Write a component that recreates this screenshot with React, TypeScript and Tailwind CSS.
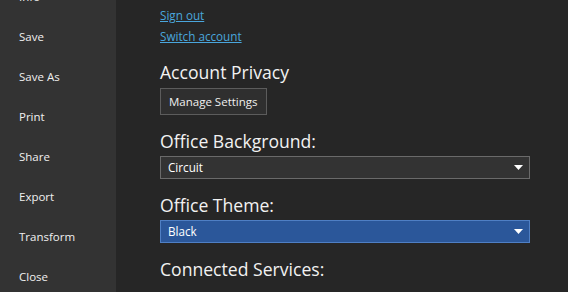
const navItems = ["Info", "Save", "Save As", "Print", "Share", "Export", "Transform", "Close"];

function Select({ value, active }: { value: string; active?: boolean }) {
  return (
    <div
      className={`flex items-center justify-between w-[370px] h-[23px] pl-[7px] pr-[6px] border text-[11.7px] text-white ${
        active ? "bg-[#2b579a] border-[#4f7fc4]" : "bg-[#333333] border-[#6a6a6a]"
      }`}
    >
      <span>{value}</span>
      <svg width="9" height="6" viewBox="0 0 9 6">
        <path d="M0 0 H9 L4.5 5 Z" fill="#ffffff" />
      </svg>
    </div>
  );
}

export default function App() {
  return (
    <div
      className="flex w-[568px] h-[292px] overflow-hidden bg-[#262626] text-white"
      style={{ fontFamily: '"Open Sans", "Noto Sans", sans-serif' }}
    >
      <nav className="w-[116px] flex-shrink-0 bg-[#333333] flex flex-col -mt-[23px]">
        {navItems.map((item) => (
          <div key={item} className="h-10 flex-shrink-0 flex items-center pl-[19px] text-[11.5px] text-[#f0f0f0]">
            {item}
          </div>
        ))}
      </nav>

      <main className="flex-1 pl-[44px] pt-[6px] flex flex-col items-start">
        <a className="text-[11.7px] leading-[18px] text-[#4aa6dd] underline">Sign out</a>
        <a className="mt-[3px] text-[11.7px] leading-[18px] text-[#4aa6dd] underline">Switch account</a>

        <h2 className="mt-[16px] text-[17.6px] leading-[22px] text-[#f2f2f2]">Account Privacy</h2>
        <button className="mt-[5px] h-[27px] px-[8px] bg-[#2f2f2f] border border-[#5c5c5c] text-[11.5px] text-[#f0f0f0]">
          Manage Settings
        </button>

        <h2 className="mt-[15px] text-[17.6px] leading-[22px] text-[#f2f2f2]">Office Background:</h2>
        <div className="mt-[4px]">
          <Select value="Circuit" />
        </div>

        <h2 className="mt-[15px] text-[17.6px] leading-[22px] text-[#f2f2f2]">Office Theme:</h2>
        <div className="mt-[4px]">
          <Select value="Black" active />
        </div>

        <h2 className="mt-[15px] text-[17.6px] leading-[22px] text-[#f2f2f2]">Connected Services:</h2>
      </main>
    </div>
  );
}
